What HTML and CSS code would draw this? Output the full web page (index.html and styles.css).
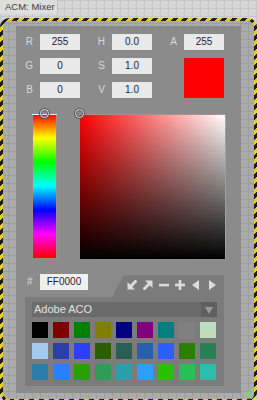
FILE: index.html
```html
<!DOCTYPE html>
<html>
<head>
<meta charset="utf-8">
<link rel="stylesheet" href="styles.css">
</head>
<body>
<div class="title">ACM: Mixer</div>
<div class="frame">
  <div class="frame-inner">
    <div class="panel">
      <div class="fields">
        <span class="lbl">R</span><span class="box">255</span>
        <span class="lbl">H</span><span class="box">0.0</span>
        <span class="lbl">A</span><span class="box">255</span>
        <span class="lbl">G</span><span class="box">0</span>
        <span class="lbl">S</span><span class="box">1.0</span>
        <span></span><span class="swatch-big"></span>
        <span class="lbl">B</span><span class="box">0</span>
        <span class="lbl">V</span><span class="box">1.0</span>
        <span></span>
      </div>
      <div class="pickers">
        <div class="hue"><span class="hue-line"></span><span class="marker hue-marker"></span></div>
        <div class="sv"><span class="marker sv-marker"></span></div>
      </div>
      <div class="hex-row">
        <span class="hash">#</span>
        <span class="hexbox">FF0000</span>
        <div class="tools">
          <svg viewBox="0 0 10 10" class="ico"><polygon points="0.5,2 0.5,9.5 8,9.5"/><line x1="9.5" y1="0.5" x2="3" y2="7"/></svg>
          <svg viewBox="0 0 10 10" class="ico"><polygon points="2,0.5 9.5,0.5 9.5,8"/><line x1="0.5" y1="9.5" x2="7" y2="3"/></svg>
          <svg viewBox="0 0 10 10" class="ico"><rect x="0" y="3.8" width="10" height="2.6"/></svg>
          <svg viewBox="0 0 10 10" class="ico"><rect x="0" y="3.7" width="10" height="2.6"/><rect x="3.7" y="0" width="2.6" height="10"/></svg>
          <svg viewBox="0 0 10 10" class="ico"><polygon points="8,0 8,10 1,5"/></svg>
          <svg viewBox="0 0 10 10" class="ico"><polygon points="2,0 2,10 9,5"/></svg>
        </div>
      </div>
      <div class="lower">
        <div class="dropdown">
          <span class="dd-text">Adobe ACO</span>
          <span class="dd-btn"><svg viewBox="0 0 10 10" width="10" height="10"><polygon points="1,2 9,2 5,9"/></svg></span>
        </div>
        <div class="swatches">
          <span style="background:#000000"></span>
          <span style="background:#800000"></span>
          <span style="background:#008000"></span>
          <span style="background:#808000"></span>
          <span style="background:#000080"></span>
          <span style="background:#800080"></span>
          <span style="background:#008080"></span>
          <span style="background:#808080"></span>
          <span style="background:#c0dcc0"></span>
          <span style="background:#a6caf0"></span>
          <span style="background:#2a3faa"></span>
          <span style="background:#2a3fff"></span>
          <span style="background:#2a5f00"></span>
          <span style="background:#2a5f55"></span>
          <span style="background:#2a5faa"></span>
          <span style="background:#2a5fff"></span>
          <span style="background:#2a7f00"></span>
          <span style="background:#2a7f55"></span>
          <span style="background:#2a7faa"></span>
          <span style="background:#2a7fff"></span>
          <span style="background:#2a9f00"></span>
          <span style="background:#2a9f55"></span>
          <span style="background:#2a9faa"></span>
          <span style="background:#2a9fff"></span>
          <span style="background:#2abf00"></span>
          <span style="background:#2abf55"></span>
          <span style="background:#2abfaa"></span>
        </div>
      </div>
    </div>
  </div>
  <svg class="grip" viewBox="0 0 10 12" width="10" height="12">
    <circle cx="2" cy="6" r="1.2"/>
    <path d="M4 3.5 A3 3 0 0 1 4 8.5"/>
    <path d="M6.5 1.5 A5 5 0 0 1 6.5 10.5"/>
  </svg>
</div>
</body>
</html>
```
FILE: styles.css
```css
html, body {
  margin: 0;
  padding: 0;
}
body {
  width: 257px;
  height: 400px;
  overflow: hidden;
  font-family: "Liberation Sans", Arial, sans-serif;
  background-color: #d6d6d6;
  background-image:
    linear-gradient(#c7c7c7 1px, transparent 1px),
    linear-gradient(90deg, #c7c7c7 1px, transparent 1px);
  background-size: 8px 8px;
}
.title {
  display: inline-block;
  height: 14px;
  line-height: 14px;
  padding: 0 5px 0 5px;
  font-size: 9.5px;
  color: #3c3c3c;
  background: #dedede;
  border-right: 1px solid #c2c2c2;
  box-sizing: border-box;
  width: 58px;
  vertical-align: top;
  white-space: nowrap;
}
.frame {
  position: relative;
  width: 257px;
  height: 384px;
  box-sizing: border-box;
  padding: 3px;
  border-radius: 9px;
  background: repeating-linear-gradient(135deg, #e6cb2e 0 3.5px, #1e1e1e 3.5px 7px);
}
.frame-inner {
  height: 100%;
  box-sizing: border-box;
  border-radius: 6px;
  padding: 5px 13px 6px 13px;
  background-color: #ababab;
  background-image:
    linear-gradient(#9f9f9f 1px, transparent 1px),
    linear-gradient(90deg, #9f9f9f 1px, transparent 1px);
  background-size: 8px 8px;
  background-position: 5px 2px;
}
.panel {
  width: 225px;
  height: 367px;
  box-sizing: border-box;
  background: #8b8b8b;
  padding-top: 8px;
}
.fields {
  display: grid;
  grid-template-columns: 24px 40px 32px 40px 32px 40px;
  grid-auto-rows: 16px;
  row-gap: 8px;
}
.lbl {
  text-align: right;
  padding-right: 7px;
  font-size: 10px;
  line-height: 16px;
  color: #dadada;
}
.box {
  background: #e9e9e9;
  text-align: center;
  font-size: 10px;
  line-height: 16px;
  color: #1e1e34;
}
.swatch-big {
  grid-column: 6;
  grid-row: span 2;
  background: #ff0000;
}
.pickers {
  display: flex;
  margin-top: 16px;
  padding-left: 16px;
  gap: 23px;
}
.hue {
  position: relative;
  width: 25px;
  height: 145px;
  box-sizing: border-box;
  border: 1px solid #9c8a8a;
  border-top: none;
  background: linear-gradient(to bottom, #ff0000 0%, #ffff00 16.7%, #00ff00 33.3%, #00ffff 50%, #0000ff 66.7%, #ff00ff 83.3%, #ff0000 100%);
}
.hue-line {
  position: absolute;
  left: -1px;
  right: -1px;
  top: 0;
  height: 1px;
  background: #f0f0f0;
}
.sv {
  position: relative;
  width: 146px;
  height: 145px;
  box-sizing: border-box;
  border-top: 1px solid #a89090;
  border-right: 1px solid #a0a0a0;
  background:
    linear-gradient(to bottom, rgba(0,0,0,0), #000000),
    linear-gradient(to right, #ff0000, #ffffff);
}
.marker {
  position: absolute;
  width: 7px;
  height: 7px;
  border-radius: 50%;
  border: 1.5px solid #d8d8d8;
  box-shadow: 0 0 0 1px #555555, inset 0 0 0 1px #555555;
}
.hue-marker {
  left: 7px;
  top: -5px;
}
.sv-marker {
  left: -5px;
  top: -6px;
}
.hex-row {
  display: flex;
  align-items: flex-start;
  margin-top: 15px;
  height: 23px;
  padding-left: 10px;
}
.hash {
  width: 14px;
  padding-left: 1px;
  box-sizing: border-box;
  font-size: 10px;
  line-height: 16px;
  color: #dadada;
}
.hexbox {
  width: 48px;
  height: 16px;
  background: #f0f0f0;
  text-align: center;
  font-size: 10px;
  line-height: 16px;
  color: #1e1e34;
}
.tools {
  margin-left: 24px;
  margin-top: 1px;
  width: 112px;
  height: 22px;
  box-sizing: border-box;
  background: #7b7b7b;
  clip-path: polygon(12px 0, 100% 0, 100% 100%, 0 100%, 4px 14px);
  display: flex;
  align-items: flex-start;
  gap: 6px;
  padding: 5px 0 0 15px;
}
.ico {
  width: 10px;
  height: 10px;
  fill: #dcdcdc;
  stroke: #dcdcdc;
}
.ico polygon, .ico rect {
  stroke: none;
}
.ico line {
  stroke-width: 3;
}
.lower {
  margin-left: 9px;
  width: 199px;
  box-sizing: border-box;
  background: #7b7b7b;
  padding: 5px 7px 6px 7px;
}
.dropdown {
  display: flex;
  height: 15px;
  background: #6b6b6b;
}
.dd-text {
  flex: 1;
  font-size: 11px;
  line-height: 15px;
  color: #e2e2e2;
  padding-left: 2px;
}
.dd-btn {
  width: 16px;
  height: 15px;
  background: #5f5f5f;
  display: flex;
  align-items: center;
  justify-content: center;
  fill: #9a9a9a;
}
.swatches {
  display: grid;
  grid-template-columns: repeat(9, 16px);
  grid-auto-rows: 16px;
  gap: 5px;
  margin-top: 5px;
}
.grip {
  position: absolute;
  right: 3px;
  bottom: 2px;
  fill: #7fd87f;
  stroke: #7fd87f;
}
.grip path {
  fill: none;
  stroke-width: 1.6;
}
```
